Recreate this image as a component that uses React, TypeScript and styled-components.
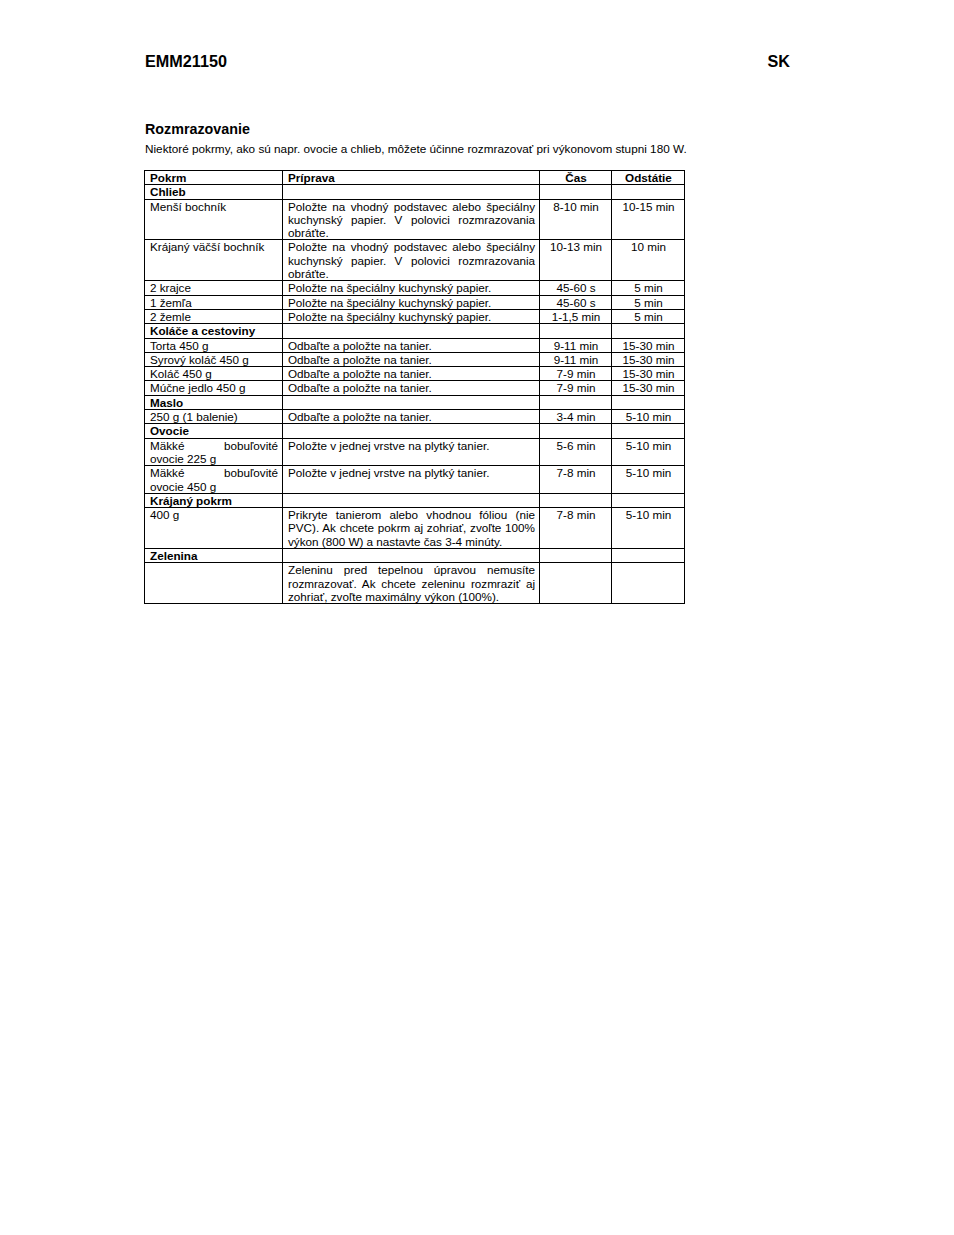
import styled, { createGlobalStyle } from 'styled-components'

type Row =
  | { kind: 'group'; name: string }
  | { kind: 'item'; name: string; prep: string; time: string; rest: string }

const rows: Row[] = [
  { kind: 'group', name: 'Chlieb' },
  {
    kind: 'item',
    name: 'Menší bochník',
    prep: 'Položte na vhodný podstavec alebo špeciálny kuchynský papier. V polovici rozmrazovania obráťte.',
    time: '8-10 min',
    rest: '10-15 min',
  },
  {
    kind: 'item',
    name: 'Krájaný väčší bochník',
    prep: 'Položte na vhodný podstavec alebo špeciálny kuchynský papier. V polovici rozmrazovania obráťte.',
    time: '10-13 min',
    rest: '10 min',
  },
  { kind: 'item', name: '2 krajce', prep: 'Položte na špeciálny kuchynský papier.', time: '45-60 s', rest: '5 min' },
  { kind: 'item', name: '1 žemľa', prep: 'Položte na špeciálny kuchynský papier.', time: '45-60 s', rest: '5 min' },
  { kind: 'item', name: '2 žemle', prep: 'Položte na špeciálny kuchynský papier.', time: '1-1,5 min', rest: '5 min' },
  { kind: 'group', name: 'Koláče a cestoviny' },
  { kind: 'item', name: 'Torta 450 g', prep: 'Odbaľte a položte na tanier.', time: '9-11 min', rest: '15-30 min' },
  { kind: 'item', name: 'Syrový koláč 450 g', prep: 'Odbaľte a položte na tanier.', time: '9-11 min', rest: '15-30 min' },
  { kind: 'item', name: 'Koláč 450 g', prep: 'Odbaľte a položte na tanier.', time: '7-9 min', rest: '15-30 min' },
  { kind: 'item', name: 'Múčne jedlo 450 g', prep: 'Odbaľte a položte na tanier.', time: '7-9 min', rest: '15-30 min' },
  { kind: 'group', name: 'Maslo' },
  { kind: 'item', name: '250 g (1 balenie)', prep: 'Odbaľte a položte na tanier.', time: '3-4 min', rest: '5-10 min' },
  { kind: 'group', name: 'Ovocie' },
  {
    kind: 'item',
    name: 'Mäkké bobuľovité ovocie 225 g',
    prep: 'Položte v jednej vrstve na plytký tanier.',
    time: '5-6 min',
    rest: '5-10 min',
  },
  {
    kind: 'item',
    name: 'Mäkké bobuľovité ovocie 450 g',
    prep: 'Položte v jednej vrstve na plytký tanier.',
    time: '7-8 min',
    rest: '5-10 min',
  },
  { kind: 'group', name: 'Krájaný pokrm' },
  {
    kind: 'item',
    name: '400 g',
    prep: 'Prikryte tanierom alebo vhodnou fóliou (nie PVC). Ak chcete pokrm aj zohriať, zvoľte 100% výkon (800 W) a nastavte čas 3-4 minúty.',
    time: '7-8 min',
    rest: '5-10 min',
  },
  { kind: 'group', name: 'Zelenina' },
  {
    kind: 'item',
    name: '',
    prep: 'Zeleninu pred tepelnou úpravou nemusíte rozmrazovať. Ak chcete zeleninu rozmraziť aj zohriať, zvoľte maximálny výkon (100%).',
    time: '',
    rest: '',
  },
]

export default function App() {
  return (
    <>
      <GlobalStyle />
      <Page>
        <Header>
          <span>EMM21150</span>
          <span>SK</span>
        </Header>

        <Heading>Rozmrazovanie</Heading>
        <Intro>
          Niektoré pokrmy, ako sú napr. ovocie a chlieb, môžete účinne rozmrazovať pri výkonovom stupni 180 W.
        </Intro>

        <Table>
          <colgroup>
            <col style={{ width: 138 }} />
            <col style={{ width: 257 }} />
            <col style={{ width: 72 }} />
            <col style={{ width: 73 }} />
          </colgroup>
          <thead>
            <tr>
              <Cell bold>Pokrm</Cell>
              <Cell bold>Príprava</Cell>
              <Cell bold center>
                Čas
              </Cell>
              <Cell bold center>
                Odstátie
              </Cell>
            </tr>
          </thead>
          <tbody>
            {rows.map((row, i) =>
              row.kind === 'group' ? (
                <tr key={i}>
                  <Cell bold>{row.name}</Cell>
                  <Cell />
                  <Cell />
                  <Cell />
                </tr>
              ) : (
                <tr key={i}>
                  <Cell justify>{row.name}</Cell>
                  <Cell justify>{row.prep}</Cell>
                  <Cell center>{row.time}</Cell>
                  <Cell center>{row.rest}</Cell>
                </tr>
              ),
            )}
          </tbody>
        </Table>
      </Page>
    </>
  )
}

const GlobalStyle = createGlobalStyle`
  html, body {
    margin: 0;
    padding: 0;
    background: #ffffff;
    color: #000000;
    font-family: 'Liberation Sans', Arial, Helvetica, sans-serif;
  }
`

const Page = styled.div`
  width: 954px;
  min-height: 1235px;
  box-sizing: border-box;
  padding: 52px 164px 0 145px;
`

const Header = styled.div`
  display: flex;
  justify-content: space-between;
  font-size: 16.2px;
  font-weight: bold;
  line-height: 18px;
`

const Heading = styled.h2`
  margin: 51px 0 0 0;
  font-size: 14.3px;
  font-weight: bold;
  line-height: 16px;
`

const Intro = styled.p`
  margin: 5px 0 0 0;
  font-size: 11.75px;
  line-height: 14px;
  white-space: nowrap;
`

const Table = styled.table`
  margin: 14px 0 0 -1px;
  border-collapse: collapse;
  table-layout: fixed;
  width: 541px;
  font-size: 11.7px;
  line-height: 13.3px;
`

const Cell = styled.td<{ bold?: boolean; center?: boolean; justify?: boolean }>`
  border: 1px solid #000000;
  padding: 0 4px 0 5px;
  vertical-align: top;
  font-weight: ${props => (props.bold ? 'bold' : 'normal')};
  text-align: ${props => (props.center ? 'center' : props.justify ? 'justify' : 'left')};
  height: 13.3px;
`
